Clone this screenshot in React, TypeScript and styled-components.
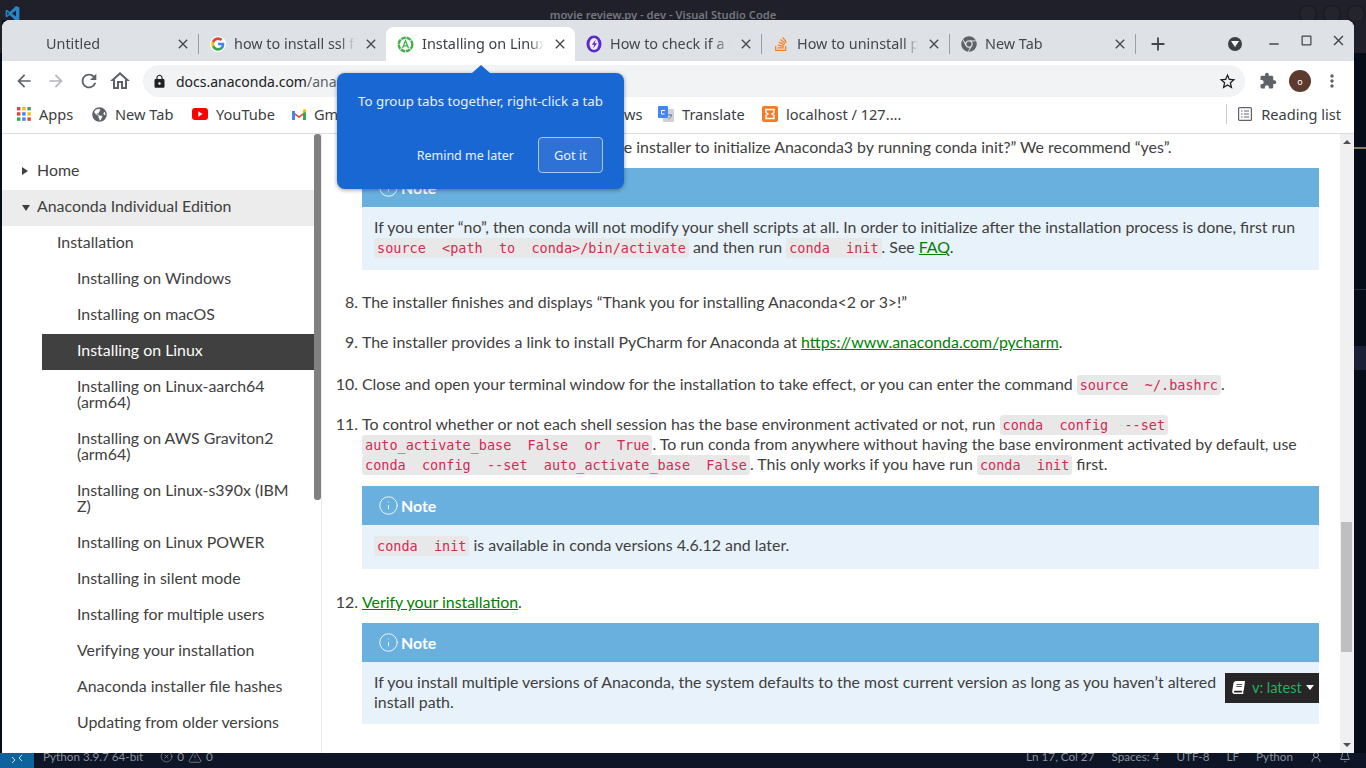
import React from 'react';
import styled, { createGlobalStyle } from 'styled-components';
import { Globe, Info, XCircle, AlertTriangle, Bell, UserRound } from 'lucide-react';
import { MdArrowBack, MdArrowForward, MdRefresh, MdOutlineHome, MdLock, MdStarBorder, MdExtension, MdMoreVert, MdClose, MdAdd, MdRemove, MdCropSquare } from 'react-icons/md';
import { FaBook, FaChrome, FaStackOverflow, FaGlobeAmericas } from 'react-icons/fa';

const Global = createGlobalStyle`
  html, body { margin: 0; padding: 0; width: 1366px; height: 768px; overflow: hidden; background: #050d18; }
  * { box-sizing: border-box; }
`;
const UI = `"Noto Sans", "Open Sans", sans-serif`;
const BODY = `Lato, "Open Sans", sans-serif`;

const Desktop = styled.div`position: relative; width: 1366px; height: 768px; display: flex; flex-direction: column; background: #050d18; overflow: hidden;`;
const TitleBar = styled.div`height: 20px; flex: none; background: #1f2029; display: flex; align-items: center; justify-content: center; position: relative; font: 600 11.200px ${UI}; color: #75777e; padding: 8px 40px 0 0;`;
const VsLogo = styled.svg`position: absolute; left: 5px; top: 6px;`;
const Dots = styled.div`position: absolute; left: 1299px; top: 5px; display: flex; gap: 6px;`;
const Dot = styled.span`width: 18px; height: 18px; border-radius: 50%; background: #24252c; border: 1px solid #16171d;`;
const EdgeStrip = styled.span<{ $left: number; $top: number; $w: number; $h: number; $c: string }>`
  position: absolute; left: ${p => p.$left}px; top: ${p => p.$top}px; width: ${p => p.$w}px; height: ${p => p.$h}px; background: ${p => p.$c};
`;
const Browser = styled.div`height: 733px; width: 1352px; margin-left: 2px; flex: none; background: #fff; border-radius: 8px 8px 0 0; display: flex; flex-direction: column; overflow: hidden; position: relative; z-index: 1;`;
const TabStrip = styled.div`height: 41px; flex: none; background: #dee1e6; padding-top: 7px; display: flex; font: 400 14.400px ${UI}; color: #45474a; position: relative;`;
const Tab = styled.div<{ $w: number; $active?: boolean }>`
  width: ${p => p.$w}px; height: 34px; display: flex; align-items: center; position: relative; flex: none;
  padding: 0 7px 0 11px; gap: 8px; white-space: nowrap;
  ${p => p.$active ? 'background:#fff;border-radius:8px 8px 0 0;color:#3c4043;' : ''}
`;
const TabText = styled.span<{ $indent?: number }>`flex: 1; overflow: hidden; padding-bottom: 2px; margin-left: ${p => p.$indent || 0}px; -webkit-mask-image: linear-gradient(90deg,#000 88%,transparent); mask-image: linear-gradient(90deg,#000 88%,transparent);`;
const TabSep = styled.i`width: 1px; height: 20px; background: #9aa0a6; flex: none; align-self: center; margin-top: 0;`;
const TabClose = styled(MdClose)`flex: none; color: #46484b;`;
const NewTab = styled.div`width: 44px; height: 34px; display: flex; align-items: center; justify-content: center; color: #44474a; flex: none;`;
const Controls = styled.div`margin-left: auto; display: flex; align-items: center; color: #44474a; height: 34px;`;
const DropCircle = styled.div`width: 14px; height: 14px; border-radius: 50%; background: #3c4043; display: flex; align-items: center; justify-content: center; margin-right: 16px; margin-top: 0;`;
const WinBtn = styled.div<{ $y: number }>`width: 32px; display: flex; justify-content: center; margin-top: ${p => p.$y}px;`;
const Toolbar = styled.div`height: 36px; flex: none; background: #fff; display: flex; align-items: center; padding: 4px 0 0 12px; color: #5f6368;`;
const NavIcon = styled.div<{ $w?: number; $c?: string; $ml?: number }>`width: ${p => p.$w || 32}px; margin-left: ${p => p.$ml || 0}px; display: flex; align-items: center; color: ${p => p.$c || '#5f6368'}; flex: none;`;
const Omni = styled.div`width: 1102px; height: 32px; margin-left: 11px; border-radius: 16px; background: #f1f3f4; display: flex; align-items: center; padding-left: 9px; gap: 9px; font: 400 14px ${UI}; color: #202124;`;
const OmniGrey = styled.span`color: #5f6368;`;
const OmniEnd = styled.div`margin-left: auto; padding-right: 8px; display: flex;`;
const Avatar = styled.div`width: 22px; height: 22px; border-radius: 50%; background: #5d3a2e; color: #fff; font: 400 9px ${UI}; display: flex; align-items: center; justify-content: center; margin: 0 0 0 8px;`;
const Bookmarks = styled.div`height: 37px; flex: none; background: #fff; border-bottom: 1px solid #dadce0; display: flex; align-items: center; padding: 0 0 2px 15px; font: 400 14.600px ${UI}; color: #3c4043; white-space: nowrap;`;
const Bookmark = styled.div<{ $w: number }>`width: ${p => p.$w}px; display: flex; align-items: center; gap: 8px; flex: none; overflow: hidden;`;
const ReadingList = styled.div`margin-left: auto; padding-right: 13px; padding-left: 11px; border-left: 1px solid #c8cacd; height: 20px; display: flex; align-items: center; gap: 9px;`;
const Page = styled.div`flex: 1; display: flex; min-height: 0; background: #fff; position: relative;`;
const Sidebar = styled.nav`width: 320px; flex: none; border-right: 1px solid #eaeaea; position: relative; overflow: hidden; padding-top: 20px; font: 400 15.900px ${BODY}; color: #404040;`;
const SideThumb = styled.div`position: absolute; right: 0; top: 0; width: 7px; height: 366px; background: #808080; border-radius: 3px;`;
const SideItem = styled.div<{ $lvl: number; $open?: boolean; $active?: boolean; $two?: boolean }>`
  min-height: 36px; line-height: ${p => p.$two ? '16px' : '32px'};
  padding-top: ${p => p.$two ? 8 : 0}px; padding-bottom: ${p => p.$two ? 12 : 4}px;
  padding-left: ${p => p.$active ? 35 : 35 + p.$lvl * 20}px;
  padding-right: 30px;
  margin-left: ${p => p.$active ? 40 : 0}px; margin-right: ${p => p.$active ? 7 : 0}px;
  background: ${p => p.$active ? '#404040' : p.$open ? '#ececec' : 'transparent'}; color: ${p => p.$active ? '#fcfcfc' : '#404040'};
  position: relative;
`;
const Caret = styled.span<{ $down?: boolean }>`
  position: absolute; left: 20px; top: 13px; width: 0; height: 0;
  ${p => p.$down
    ? 'border-left:4.500px solid transparent;border-right:4.500px solid transparent;border-top:6px solid #404040;top:15px;'
    : 'border-top:4.500px solid transparent;border-bottom:4.500px solid transparent;border-left:6px solid #404040;'}
`;
const Content = styled.main`flex: 1; position: relative; overflow: hidden; padding: 3px 21px 0 40px; font: 400 15.900px/20px ${BODY}; color: #404040;`;
const Line = styled.div<{ $mb: number }>`margin-bottom: ${p => p.$mb}px; white-space: nowrap;`;
const NoteBox = styled.div`background: #e7f2fa;`;
const NoteHead = styled.div`height: 39px; background: #6ab0de; color: #fff; font-weight: 700; display: flex; align-items: center; padding-left: 16px; gap: 2px;`;
const NoteBody = styled.div<{ $h: number }>`height: ${p => p.$h}px; padding: 10px 12px 0 12px;`;
const Code = styled.code`font: 400 13.500px/16px "DejaVu Sans Mono", monospace; color: #d32a55; background: #e8e8e8; border-radius: 3px; padding: 2px 3px; white-space: pre;`;
const A = styled.a`color: #008000; text-decoration: underline;`;
const Item = styled.div<{ $top: number }>`position: relative; margin-top: ${p => p.$top}px; white-space: nowrap;`;
const Spacer = styled.div<{ $h: number }>`height: ${p => p.$h}px;`;
const Num = styled.span`position: absolute; right: 100%; margin-right: 4px; top: 0; white-space: nowrap;`;
const PageScroll = styled.div`width: 14px; flex: none; background: #f0f0f0; position: relative;`;
const ScrollArrow = styled.span<{ $down?: boolean }>`position: absolute; left: 3px; width: 0; height: 0; border-left: 4px solid transparent; border-right: 4px solid transparent;
  ${p => p.$down ? 'bottom: 6px; border-top: 4px solid #505050;' : 'top: 6px; border-bottom: 4px solid #505050;'}`;
const ScrollThumb = styled.div`position: absolute; left: 1px; top: 388px; width: 11px; height: 130px; background: #bfbfbf;`;
const Version = styled.div`position: absolute; right: 21px; bottom: 50px; width: 94px; height: 30px; background: #272525; display: flex; align-items: center; padding: 0 0 2px 7px; gap: 7px; color: #27ae60; font: 400 14.500px ${BODY};`;
const VCaret = styled.span`width: 0; height: 0; border-left: 4.500px solid transparent; border-right: 4.500px solid transparent; border-top: 5px solid #fff; margin-left: -3px;`;
const BookIcon = styled(FaBook)`transform: skewX(-8deg); flex: none;`;
const Bubble = styled.div`position: absolute; left: 337px; top: 73px; width: 287px; height: 116px; background: #1967d2; border-radius: 8px; box-shadow: 0 1px 4px rgba(0,0,0,.4); color: #e8f0fe; font: 400 13.300px ${UI}; padding: 19px 21px 0; z-index: 5;`;
const BubbleTip = styled.span`position: absolute; left: 135px; top: -8px; width: 0; height: 0; border-left: 9px solid transparent; border-right: 9px solid transparent; border-bottom: 8px solid #1967d2;`;
const BubbleActions = styled.div`display: flex; justify-content: flex-end; align-items: center; margin-top: 27px; gap: 24px; font-size: 12.500px;`;
const GotIt = styled.div`width: 65px; height: 36px; border: 1px solid #a8c7fa; background: #2f72d6; border-radius: 4px; display: flex; align-items: center; justify-content: center; font-size: 12.800px;`;
const Status = styled.div`height: 15px; flex: none; display: flex; align-items: flex-start; background: #0d1526; color: #8b919c; font: 400 11.700px/7px ${BODY}; white-space: nowrap; overflow: hidden;`;
const Remote = styled.div`width: 34px; height: 15px; background: #0e639c; display: flex; align-items: flex-start; justify-content: center; padding-top: 1px;`;
const StatusLeft = styled.div`display: flex; gap: 17px; padding: 0 0 0 9px; align-items: center; height: 7px;`;
const StatusRight = styled.div`margin-left: auto; display: flex; align-items: center; gap: 17px; padding-right: 15px; height: 7px;`;
const Ico = styled.span`display: inline-flex; align-items: center; gap: 4px;`;

const G = () => <svg width="16" height="16" viewBox="0 0 48 48"><circle cx="24" cy="24" r="24" fill="#fff"/><path fill="#4285F4" d="M43 24.500c0-1.400-.1-2.700-.4-4H24v7.600h10.800c-.5 2.500-1.900 4.600-4 6v5h6.500C41 35.600 43 30.500 43 24.500z"/><path fill="#34A853" d="M24 44c5.400 0 9.900-1.800 13.300-4.900l-6.500-5c-1.800 1.200-4.100 1.900-6.800 1.900-5.200 0-9.600-3.500-11.200-8.200H6.100v5.200C9.400 39.500 16.200 44 24 44z"/><path fill="#FBBC05" d="M12.800 27.800c-.8-2.500-.8-5.100 0-7.600V15H6.100c-2.800 5.600-2.800 12.400 0 18z"/><path fill="#EA4335" d="M24 12c2.900 0 5.600 1 7.600 3l5.700-5.700C33.900 6.100 29.300 4 24 4 16.200 4 9.400 8.500 6.100 15l6.700 5.200C14.400 15.500 18.800 12 24 12z"/></svg>;
const Ana = () => <svg width="17" height="17" viewBox="0 0 18 18"><circle cx="9" cy="9" r="7.200" fill="none" stroke="#43b049" strokeWidth="2.600" strokeDasharray="5 .8"/><path d="M5.800 13 9 5l3.200 8M6.800 10.500h4.400" fill="none" stroke="#43b049" strokeWidth="1.400"/></svg>;
const Hex = () => <svg width="16" height="18" viewBox="0 0 16 18"><ellipse cx="8" cy="9" rx="7.500" ry="8.500" fill="#5b2bc9"/><ellipse cx="8" cy="9" rx="4.500" ry="6" fill="#efeaff"/><path d="M9.800 4.500 5.800 9.800h2.400l-1 3.800 3.900-5.300H8.700z" fill="#5b2bc9"/></svg>;
const AppsGrid = () => {
  const c = ['#ea4335','#fbbc05','#34a853','#ea4335','#4285f4','#fbbc05','#34a853','#4285f4','#ea4335'];
  return <svg width="14" height="14" viewBox="0 0 14 14">{c.map((f, i) => <rect key={i} x={(i % 3) * 5.200} y={Math.floor(i / 3) * 5.200} width="3.400" height="3.400" fill={f}/>)}</svg>;
};
const YT = () => <svg width="16" height="12" viewBox="0 0 16 12"><rect width="16" height="12" rx="3" fill="#f00"/><path d="m6.300 3.300 4.300 2.700-4.300 2.700z" fill="#fff"/></svg>;
const Gm = () => <svg width="14" height="11" viewBox="0 0 14 11"><path d="M0 2 7 7l7-5v2L7 9 0 4z" fill="#ea4335"/><path d="M0 11V2h3v9z" fill="#4285f4"/><path d="M11 11V2h3v9z" fill="#34a853"/><path d="M11 4V1l1.500-1L14 1v2z" fill="#fbbc05"/></svg>;
const Tr = () => <svg width="16" height="16" viewBox="0 0 16 16"><rect x="5" y="3" width="11" height="13" rx="1" fill="#cfd2d6"/><path d="M10 9h4M12 8v1M10.500 13c2-1 3-2.500 3-4" stroke="#5f6368" fill="none" strokeWidth=".8"/><rect width="10" height="12" rx="1" fill="#4285f4"/><path d="M7 4.500H3.500v3.500H6.500" fill="none" stroke="#fff"/></svg>;
const Xampp = () => <svg width="16" height="16" viewBox="0 0 16 16"><rect width="16" height="16" rx="2" fill="#f07c2a"/><path d="M4 3.500h8v3l-2 1.500 2 1.500v3H4v-3L6 8 4 6.500z" fill="none" stroke="#fff" strokeWidth="1.500"/></svg>;
const VS = () => <svg width="15" height="15" viewBox="0 0 24 24" fill="#2489ca"><path d="M17.500 0 7.600 9.700 3 6.100 1 7.200v9.600l2 1.100 4.600-3.600 9.900 9.700 5.500-2.500V2.500zM3.500 15V9l3 3zm14 1.800L11 12l6.500-4.800z"/></svg>;
const ListFrame = () => <svg width="14" height="14" viewBox="0 0 14 14" fill="none" stroke="#5f6368" strokeWidth="1.200"><rect x=".6" y=".6" width="12.800" height="12.800" rx="1"/><path d="M3 4h1.500M3 7h1.500M3 10h1.500M6 4h5M6 7h5M6 10h5"/></svg>;
const RemoteIcon = () => <svg width="12" height="10" viewBox="0 0 12 10" fill="none" stroke="#cfe3f2" strokeWidth="1"><path d="m1 9 3-3-3-3M11 1 8 4l3 3"/></svg>;

const side: [string, number, string?][] = [
  ['Home', 0, 'r'],
  ['Anaconda Individual Edition', 0, 'd'],
  ['Installation', 1],
  ['Installing on Windows', 2],
  ['Installing on macOS', 2],
  ['Installing on Linux', 2, 'a'],
  ['Installing on Linux-aarch64 (arm64)', 2, 't'],
  ['Installing on AWS Graviton2 (arm64)', 2, 't'],
  ['Installing on Linux-s390x (IBM Z)', 2, 't'],
  ['Installing on Linux POWER', 2],
  ['Installing in silent mode', 2],
  ['Installing for multiple users', 2],
  ['Verifying your installation', 2],
  ['Anaconda installer file hashes', 2],
  ['Updating from older versions', 2],
];

const Note = ({ h, children }: { h: number; children: React.ReactNode }) => (
  <NoteBox>
    <NoteHead><Info size={21} strokeWidth={1} />Note</NoteHead>
    <NoteBody $h={h}>{children}</NoteBody>
  </NoteBox>
);

export default function App() {
  return (
    <Desktop>
      <Global />
      <TitleBar>
        <VsLogo as="div"><VS /></VsLogo>
        movie review.py - dev - Visual Studio Code
        <Dots><Dot /><Dot /><Dot /></Dots>
      </TitleBar>
      <EdgeStrip $left={0} $top={20} $w={2} $h={33} $c="#1f2029" />
      <EdgeStrip $left={1354} $top={20} $w={12} $h={33} $c="#1f2029" />
      <EdgeStrip $left={1354} $top={147} $w={12} $h={2} $c="#8a7a60" />
      <EdgeStrip $left={1354} $top={289} $w={12} $h={1} $c="#2a2a44" />
      <EdgeStrip $left={1354} $top={346} $w={12} $h={24} $c="#1a2035" />
      <Browser>
        <TabStrip>
          <Tab $w={196}><TabText $indent={33}>Untitled</TabText><TabClose size={16} /></Tab>
          <TabSep />
          <Tab $w={187}><G /><TabText>how to install ssl for</TabText><TabClose size={16} /></Tab>
          <Tab $w={189} $active><Ana /><TabText>Installing on Linux</TabText><TabClose size={16} /></Tab>
          <Tab $w={186}><Hex /><TabText>How to check if a libr</TabText><TabClose size={16} /></Tab>
          <TabSep />
          <Tab $w={187}><FaStackOverflow size={16} color="#f48024" /><TabText>How to uninstall pyth</TabText><TabClose size={16} /></Tab>
          <TabSep />
          <Tab $w={185}><FaChrome size={16} color="#5f6368" /><TabText>New Tab</TabText><TabClose size={16} /></Tab>
          <TabSep />
          <NewTab><MdAdd size={22} /></NewTab>
          <Controls>
            <DropCircle><svg width="8" height="6" viewBox="0 0 8 6"><path d="M0 0h8L4 6z" fill="#fff"/></svg></DropCircle>
            <WinBtn $y={-1}><MdRemove size={16} /></WinBtn>
            <WinBtn $y={-8}><MdCropSquare size={15} /></WinBtn>
            <WinBtn $y={-8}><MdClose size={17} /></WinBtn>
          </Controls>
        </TabStrip>
        <Toolbar>
          <NavIcon><MdArrowBack size={20} /></NavIcon>
          <NavIcon $c="#b5b7ba"><MdArrowForward size={20} /></NavIcon>
          <NavIcon><MdRefresh size={22} /></NavIcon>
          <NavIcon $w={24} $ml={-2}><MdOutlineHome size={24} /></NavIcon>
          <Omni>
            <MdLock size={15} />
            <span>docs.anaconda.com<OmniGrey>/anaconda/install/linux/</OmniGrey></span>
            <OmniEnd><MdStarBorder size={19} /></OmniEnd>
          </Omni>
          <NavIcon $w={22} $ml={14}><MdExtension size={18} /></NavIcon>
          <Avatar>o</Avatar>
          <NavIcon $w={20} $ml={11}><MdMoreVert size={20} /></NavIcon>
        </Toolbar>
        <Bookmarks>
          <Bookmark $w={75}><AppsGrid />Apps</Bookmark>
          <Bookmark $w={100}><FaGlobeAmericas size={15} color="#5f6368" />New Tab</Bookmark>
          <Bookmark $w={100}><YT />YouTube</Bookmark>
          <Bookmark $w={290}><Gm />Gmail</Bookmark>
          <Bookmark $w={76}><Globe size={15} />News</Bookmark>
          <Bookmark $w={104}><Tr />Translate</Bookmark>
          <Bookmark $w={200}><Xampp />localhost / 127....</Bookmark>
          <ReadingList><ListFrame />Reading list</ReadingList>
        </Bookmarks>
        <Page>
          <Sidebar>
            {side.map(([t, l, f]) => (
              <SideItem key={t} $lvl={l} $open={f === 'd'} $active={f === 'a'} $two={f === 't'}>
                {f === 'r' && <Caret />}
                {f === 'd' && <Caret $down />}
                {t}
              </SideItem>
            ))}
            <SideThumb />
          </Sidebar>
          <Content>
            <Line $mb={11}>The installer prompts “Do you wish the installer to initialize Anaconda3 by running conda init?” We recommend “yes”.</Line>
            <Note h={63}>
              If you enter “no”, then conda will not modify your shell scripts at all. In order to initialize after the installation process is done, first run<br />
              <Code>{'source  <path  to  conda>/bin/activate'}</Code> and then run <Code>{'conda  init'}</Code>. See <A>FAQ</A>.
            </Note>
            <Item $top={22}><Num>8.</Num>The installer finishes and displays “Thank you for installing Anaconda&lt;2 or 3&gt;!”</Item>
            <Item $top={20}><Num>9.</Num>The installer provides a link to install PyCharm for Anaconda at <A>https://www.anaconda.com/pycharm</A>.</Item>
            <Item $top={22}><Num>10.</Num>Close and open your terminal window for the installation to take effect, or you can enter the command <Code>{'source  ~/.bashrc'}</Code>.</Item>
            <Item $top={20}><Num>11.</Num>To control whether or not each shell session has the base environment activated or not, run <Code>{'conda  config  --set'}</Code><br />
              <Code>{'auto_activate_base  False  or  True'}</Code>. To run conda from anywhere without having the base environment activated by default, use<br />
              <Code>{'conda  config  --set  auto_activate_base  False'}</Code>. This only works if you have run <Code>{'conda  init'}</Code> first.</Item>
            <Spacer $h={12} />
            <Note h={44}><Code>{'conda  init'}</Code> is available in conda versions 4.6.12 and later.</Note>
            <Item $top={23}><Num>12.</Num><A>Verify your installation</A>.</Item>
            <Spacer $h={11} />
            <Note h={62}>If you install multiple versions of Anaconda, the system defaults to the most current version as long as you haven’t altered<br />install path.</Note>
            <Version><BookIcon size={13} color="#fff" />v: latest<VCaret /></Version>
          </Content>
          <PageScroll>
            <ScrollArrow />
            <ScrollThumb />
            <ScrollArrow $down />
          </PageScroll>
        </Page>
      </Browser>
      <Status>
        <Remote><RemoteIcon /></Remote>
        <StatusLeft>
          <span>Python 3.9.7 64-bit</span>
          <Ico><XCircle size={13} strokeWidth={1.300} />0<AlertTriangle size={14} strokeWidth={1.300} />0</Ico>
        </StatusLeft>
        <StatusRight>
          <span>Ln 17, Col 27</span><span>Spaces: 4</span><span>UTF-8</span><span>LF</span><span>Python</span>
          <UserRound size={12} /><Bell size={12} />
        </StatusRight>
      </Status>
      <Bubble>
        <BubbleTip />
        To group tabs together, right-click a tab
        <BubbleActions>
          <span>Remind me later</span>
          <GotIt>Got it</GotIt>
        </BubbleActions>
      </Bubble>
    </Desktop>
  );
}
